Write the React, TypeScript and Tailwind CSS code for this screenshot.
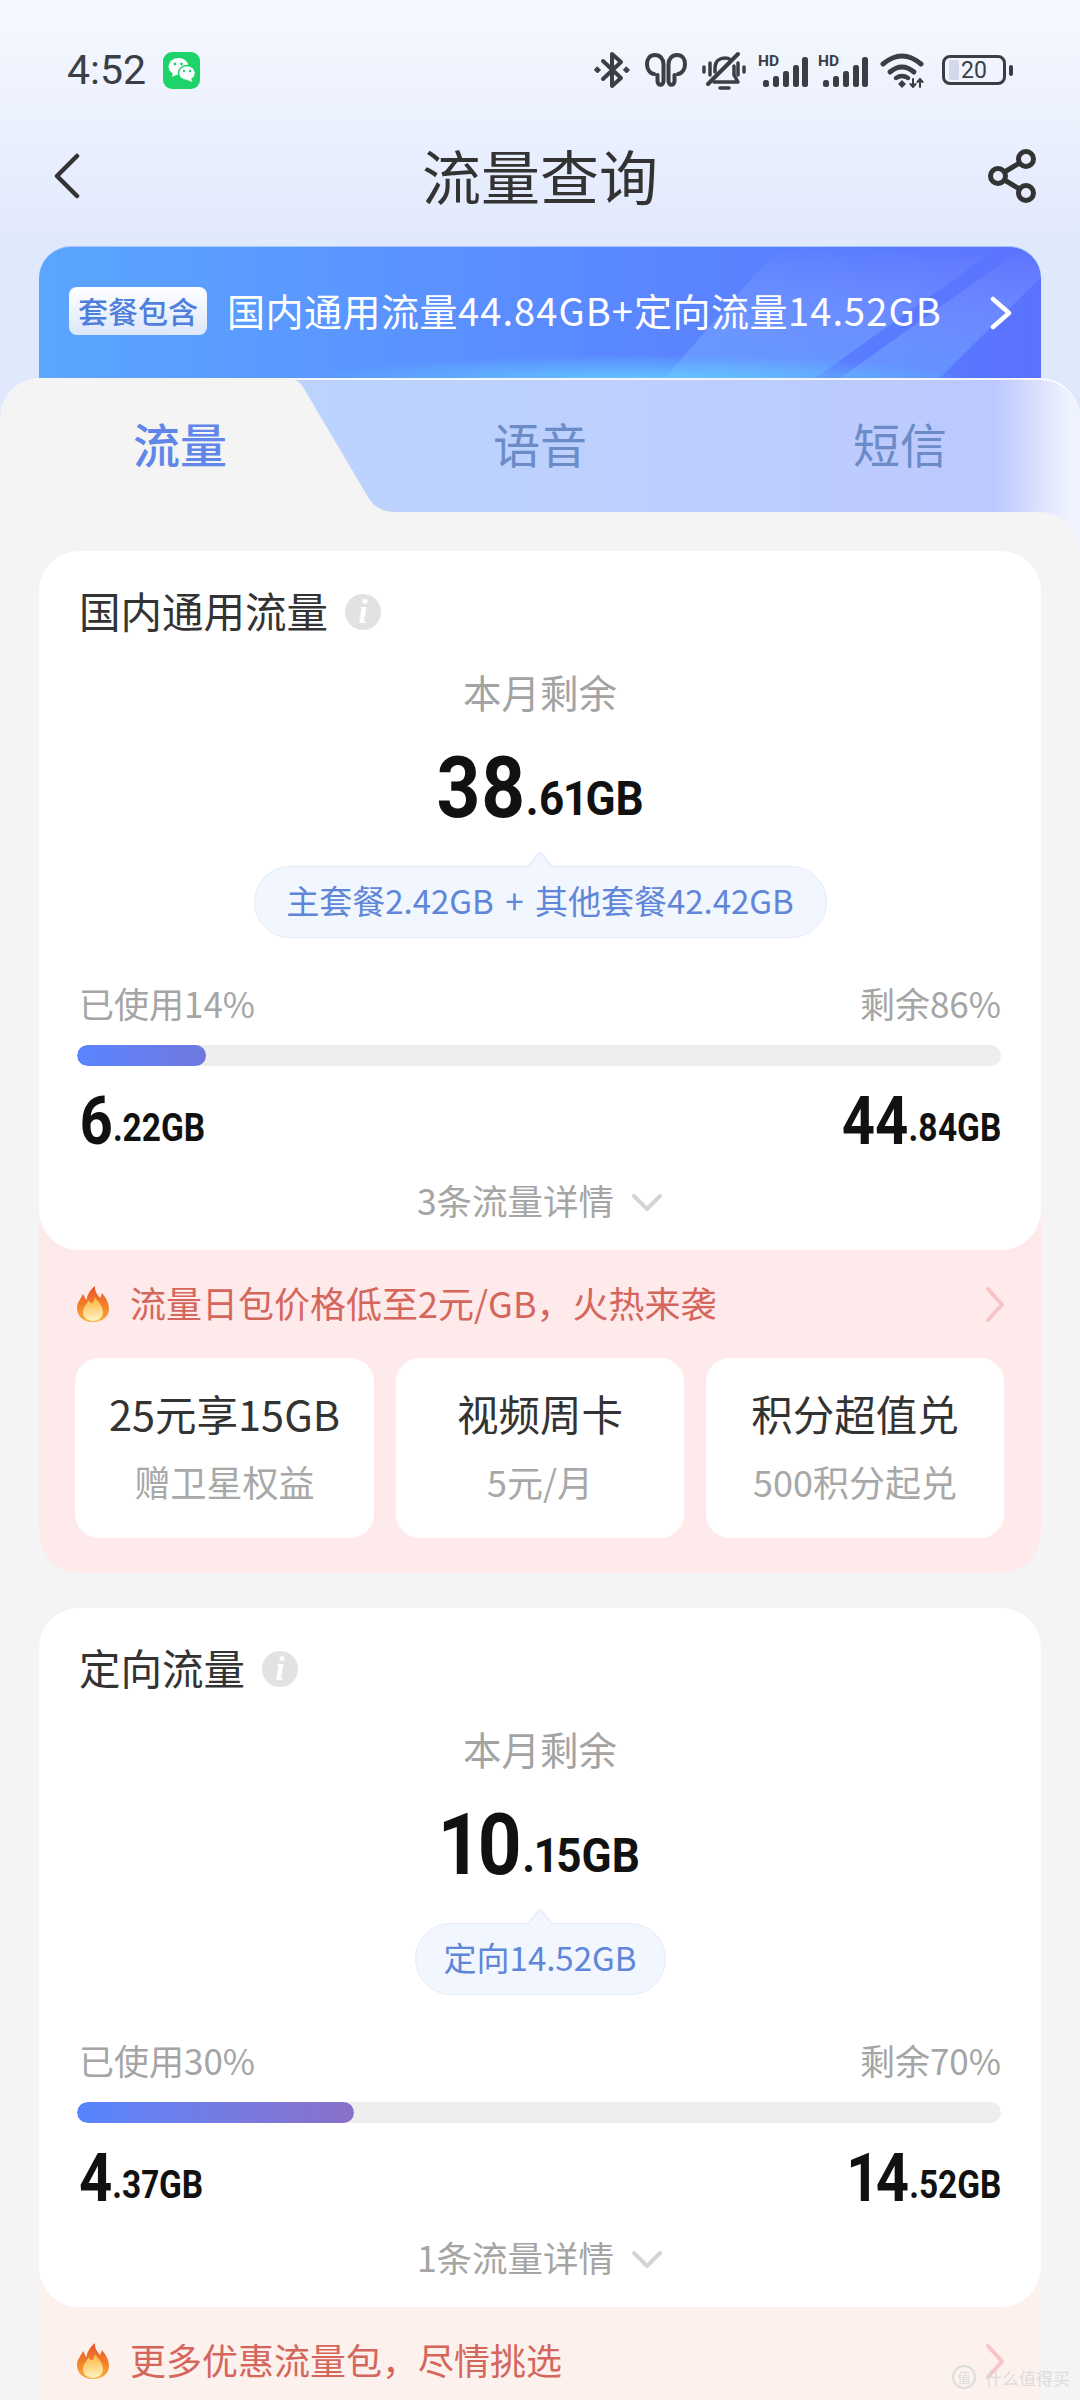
import React from 'react'

const cjk = "font-['Noto_Sans_CJK_SC','Noto_Sans',sans-serif]"

function Bluetooth() {
  return (
    <svg width="36" height="38" viewBox="0 0 36 38" fill="none" stroke="#3b3e44" strokeWidth="4" strokeLinejoin="round" strokeLinecap="round">
      <path d="M9 10 L27 27 L18 35 V3 L27 11 L9 28" />
      <path d="M3.5 16 L6.5 19 L3.5 22 L0.5 19 Z M32.5 16 L35.5 19 L32.5 22 L29.5 19 Z" fill="#3b3e44" strokeWidth="1" />
    </svg>
  )
}

function Buds() {
  return (
    <svg width="42" height="34" viewBox="0 0 42 34" fill="none" stroke="#3b3e44" strokeWidth="4" strokeLinecap="round" strokeLinejoin="round">
      <path d="M9 21 C4 20 2 15 2 11 C2 6 5 2 10 2 C15 2 18.5 6 18.5 11 V28 C18.5 33 12.5 33 12.5 28 V22" />
      <path d="M33 21 C38 20 40 15 40 11 C40 6 37 2 32 2 C27 2 23.5 6 23.5 11 V28 C23.5 33 29.500 33 29.500 28 V22" />
    </svg>
  )
}

function BellOff() {
  return (
    <svg width="44" height="39" viewBox="0 0 44 39" fill="none" stroke="#3b3e44" strokeWidth="3.5" strokeLinecap="round" strokeLinejoin="round">
      <path d="M13 21 V17 C13 10 18 7 23 7 C25 7 27 7.500 28 8.500 M32 15 V24 L36 31 H12" />
      <path d="M6 33 L36 3" strokeWidth="4" />
      <path d="M2 16 V21 M8 12 V24 M36 12 V24 M42 16 V21" />
      <path d="M18 37 H27" />
    </svg>
  )
}

function Signal() {
  const bars = [
    { x: 5, h: 7 },
    { x: 15, h: 11 },
    { x: 25, h: 16 },
    { x: 35, h: 22 },
    { x: 44, h: 30 },
  ]
  return (
    <svg width="50" height="36" viewBox="0 0 50 36">
      <text x="0" y="14" fontFamily="Roboto, sans-serif" fontWeight="700" fontSize="15.500" fill="#3b3e44">HD</text>
      {bars.map((b) => (
        <rect key={b.x} x={b.x} y={35 - b.h} width="6" height={b.h} rx="2.500" fill="#3b3e44" />
      ))}
    </svg>
  )
}

function Wifi() {
  return (
    <svg width="47" height="35" viewBox="0 0 47 35" fill="none" stroke="#3b3e44" strokeLinecap="round">
      <path d="M3 11 Q22 -5 41 11" strokeWidth="5" />
      <path d="M10 19 Q22 9 34 19" strokeWidth="5" />
      <path d="M16 25 Q22 21 28 25" strokeWidth="4.500" />
      <path d="M22 27 L26 31 L22 35 L18 31 Z" fill="#3b3e44" stroke="none" />
      <path d="M33 26 V34 M30.500 31 L33 34 L35.500 31 M40 34 V26 M37.500 29 L40 26 L42.500 29" strokeWidth="2" />
    </svg>
  )
}

function Battery() {
  return (
    <div className="flex items-center">
      <div className="w-[64px] h-[30px] rounded-[8px] border-[3px] border-[#3b3e44] flex items-center pl-[4px]">
        <div className="w-[10px] h-[20px] rounded-[2px] bg-[#d3d9e8]" />
        <span className="ml-[2px] font-['Roboto',sans-serif] text-[23px] leading-none text-[#3b3e44]">20</span>
      </div>
      <div className="ml-[3px] w-[4px] h-[11px] rounded-full bg-[#3b3e44]" />
    </div>
  )
}

function WeChatBadge() {
  return (
    <div className="w-[37px] h-[37px] rounded-[9px] bg-[#1fd36b] flex items-center justify-center">
      <svg width="30" height="28" viewBox="0 0 30 28">
        <ellipse cx="11.500" cy="10.500" rx="10" ry="8.500" fill="#fff" />
        <path d="M6 16 L5 21 L11 18 Z" fill="#fff" />
        <ellipse cx="20" cy="17" rx="8.500" ry="7.500" fill="#fff" stroke="#1fd36b" strokeWidth="1.500" />
        <path d="M24 22 L25.500 26 L20 24 Z" fill="#fff" />
        <circle cx="8" cy="8" r="1.400" fill="#1fd36b" />
        <circle cx="14.500" cy="8" r="1.400" fill="#1fd36b" />
        <circle cx="17" cy="15" r="1.200" fill="#1fd36b" />
        <circle cx="23" cy="15" r="1.200" fill="#1fd36b" />
      </svg>
    </div>
  )
}

function Flame() {
  return (
    <svg width="34" height="36" viewBox="0 0 34 36" className="shrink-0">
      <defs>
        <linearGradient id="flameOuter" x1="0" y1="0" x2="0" y2="1">
          <stop offset="0" stopColor="#e8512a" />
          <stop offset="0.6" stopColor="#f5862a" />
          <stop offset="1" stopColor="#fbb040" />
        </linearGradient>
        <linearGradient id="flameInner" x1="0" y1="0" x2="0" y2="1">
          <stop offset="0" stopColor="#fbb338" />
          <stop offset="1" stopColor="#fff3c4" />
        </linearGradient>
      </defs>
      <path d="M17 36 C7 36 1 30 1 22 C1 16 5 13 7 8 C9 11 9 13 10.500 14 C11 9 14 4 19 0 C18.500 5 21 8 24 12 C25 10 25.500 9 26 7 C30 12 33 17 33 23 C33 31 26 36 17 36 Z" fill="url(#flameOuter)" />
      <path d="M17 35 C11 35 7 31 7 26 C7 21 11 18 13 14 C14 17 15 18 17 16 C18 15 18.500 13 18.500 11 C22 15 27 20 27 26 C27 31 23 35 17 35 Z" fill="url(#flameInner)" />
    </svg>
  )
}

function Chevron({ color, w = 20, h = 37, sw = 4, left = false }: { color: string; w?: number; h?: number; sw?: number; left?: boolean }) {
  const d = left ? `M${w - 3} 3 L3 ${h / 2} L${w - 3} ${h - 3}` : `M3 3 L${w - 3} ${h / 2} L3 ${h - 3}`
  return (
    <svg width={w} height={h} viewBox={`0 0 ${w} ${h}`} fill="none" stroke={color} strokeWidth={sw} strokeLinecap="round" strokeLinejoin="round">
      <path d={d} />
    </svg>
  )
}

function Info() {
  return (
    <div className="w-[36px] h-[36px] rounded-full bg-[#e2e2e2] flex items-center justify-center">
      <span className="font-['Liberation_Serif',serif] italic font-bold text-[34px] leading-none text-white">i</span>
    </div>
  )
}

function Amount({ big, small, side }: { big: string; small: string; side: 'left' | 'right' }) {
  return (
    <div className={side === 'left' ? 'h-[47px] flex items-end origin-left scale-x-[0.88] proportional-nums' : 'h-[47px] flex items-end origin-right scale-x-[0.88] proportional-nums'}>
      <span className="font-['Roboto',sans-serif] font-bold text-[66px] leading-[47px] text-[#111] relative top-[3px]">{big}</span>
      <span className="font-['Roboto',sans-serif] font-bold text-[38px] leading-[28px] text-[#111]">{small}</span>
    </div>
  )
}

function UsageCard(props: {
  title: string
  big: string
  small: string
  pill: string
  pillWidth: string
  usedLabel: string
  leftLabel: string
  fill: React.ReactNode
  usedBig: string
  usedSmall: string
  leftBig: string
  leftSmall: string
  detail: string
}) {
  return (
    <div className="bg-white rounded-[40px] pt-[40px] pb-[33px] px-[40px]">
      <div className="flex items-center h-[38px]">
        <span className={`${cjk} text-[41.500px] leading-[38px] text-[#333]`}>{props.title}</span>
        <div className="ml-[17px] mt-[4px]"><Info /></div>
      </div>
      <div className={`${cjk} mt-[44px] h-[36px] text-center text-[38.500px] leading-[36px] text-[#a3a3a3]`}>本月剩余</div>
      <div className="mt-[48px] h-[60px] flex justify-center">
        <div className="flex items-end scale-x-[0.9] proportional-nums">
          <span className="font-['Roboto',sans-serif] font-bold text-[85px] leading-[60px] text-[#111] relative top-[1px]">{props.big}</span>
          <span className="font-['Roboto',sans-serif] font-bold text-[49px] leading-[36px] text-[#111]">{props.small}</span>
        </div>
      </div>
      <div className="mt-[49px] flex justify-center">
        <div className={`${props.pillWidth} relative h-[72px] rounded-[36px] bg-[#f2f6fe] border-[1.5px] border-[#e4ebf9] flex items-center justify-center pb-[3px]`}>
          <svg width="26" height="16" viewBox="0 0 26 16" className="absolute top-[-15px] left-1/2 -translate-x-1/2">
            <path d="M1 16 L11 2 Q13 0 15 2 L25 16 Z" fill="#f2f6fe" />
            <path d="M1 15 L11 2 Q13 0 15 2 L25 15" fill="none" stroke="#e4ebf9" strokeWidth="1.500" />
          </svg>
          <span className={`${cjk} text-[33px] leading-none text-[#5f86d8] [word-spacing:4px]`}>{props.pill}</span>
        </div>
      </div>
      <div className={`${cjk} mt-[49px] h-[32px] flex justify-between text-[35px] leading-[32px] text-[#a5a5a5]`}>
        <span>{props.usedLabel}</span>
        <span>{props.leftLabel}</span>
      </div>
      <div className="mt-[26px] -ml-[2px] h-[21px] rounded-full bg-[#eeeeee] overflow-hidden">{props.fill}</div>
      <div className="mt-[29px] flex justify-between">
        <Amount big={props.usedBig} small={props.usedSmall} side="left" />
        <Amount big={props.leftBig} small={props.leftSmall} side="right" />
      </div>
      <div className="mt-[43px] h-[32px] flex items-center justify-center pb-[2px]">
        <span className={`${cjk} text-[35.500px] leading-[32px] text-[#a5a5a5]`}>{props.detail}</span>
        <div className="ml-[17px] mt-[4px]">
          <svg width="32" height="19" viewBox="0 0 32 19" fill="none" stroke="#d4d4d4" strokeWidth="4" strokeLinecap="round" strokeLinejoin="round">
            <path d="M3 3 L16 16 L29 3" />
          </svg>
        </div>
      </div>
    </div>
  )
}

function PromoRow({ text }: { text: string }) {
  return (
    <div className="flex items-center h-[36px] pl-[37px] pr-[36px]">
      <Flame />
      <span className={`${cjk} ml-[20px] mb-[5px] text-[36px] leading-[36px] text-[#d4665c]`}>{text}</span>
      <div className="ml-auto"><Chevron color="#f6c4c4" /></div>
    </div>
  )
}

function OfferCard({ width, title, sub }: { width: string; title: string; sub: string }) {
  return (
    <div className={`${width} h-[180px] rounded-[24px] bg-white flex flex-col items-center pt-[33px]`}>
      <div className={`${cjk} text-[41.500px] leading-[44px] text-[#333]`}>{title}</div>
      <div className={`${cjk} mt-[28px] text-[36px] leading-[36px] text-[#a8a8a8]`}>{sub}</div>
    </div>
  )
}

export default function App() {
  return (
    <div className="relative w-[1080px] h-[2400px] overflow-hidden bg-[#f4f4f4]">
      <div className="bg-[linear-gradient(180deg,#f6f9ff_0px,#e0e8fc_250px,#dfe8fc_100%)] pb-[40px]">
        <div className="pt-[30px] h-[110px]">
          <div className="h-[80px] flex items-center pl-[67px] pr-[67px]">
            <span className="font-['Roboto',sans-serif] text-[41px] leading-none text-[#3b3e44]">4:52</span>
            <div className="ml-[17px]"><WeChatBadge /></div>
            <div className="ml-auto flex items-center">
              <Bluetooth />
              <div className="ml-[15px]"><Buds /></div>
              <div className="ml-[15px]"><BellOff /></div>
              <div className="ml-[12px]"><Signal /></div>
              <div className="ml-[10px]"><Signal /></div>
              <div className="ml-[12px]"><Wifi /></div>
              <div className="ml-[15px]"><Battery /></div>
            </div>
          </div>
        </div>
        <div className="mt-[26px] h-[80px] flex items-center justify-between px-[42px]">
          <div className="ml-[12px] mr-[12px]"><Chevron color="#333" w={26} h={46} sw={4.500} left /></div>
          <span className={`${cjk} text-[59px] leading-none text-[#333] pb-[3px]`}>流量查询</span>
          <svg width="50" height="54" viewBox="0 0 50 54" fill="none" stroke="#333" strokeWidth="5">
            <circle cx="38" cy="10" r="7.500" />
            <circle cx="10" cy="27" r="7.500" />
            <circle cx="38" cy="44" r="7.500" />
            <path d="M31.500 14 L16.500 23 M16.500 31 L31.500 40" />
          </svg>
        </div>
        <div className="relative mt-[30px] mx-[39px] h-[132px] rounded-t-[32px] overflow-hidden bg-gradient-to-r from-[#5aa6ff] via-[#5a8cff] to-[#5a72ff] flex items-center pl-[30px] pb-[6px] border-t border-[#a9c6ff]">
          <svg className="absolute inset-0" width="1002" height="132" viewBox="0 0 1002 132">
            <defs>
              <radialGradient id="glow" cx="0.5" cy="0.5" r="0.5">
                <stop offset="0" stopColor="#66d4ff" stopOpacity="0.9" />
                <stop offset="1" stopColor="#66d4ff" stopOpacity="0" />
              </radialGradient>
              <linearGradient id="stripe" x1="0" y1="1" x2="0" y2="0">
                <stop offset="0" stopColor="#6ec0ff" stopOpacity="0.35" />
                <stop offset="1" stopColor="#ffffff" stopOpacity="0" />
              </linearGradient>
            </defs>
            <polygon points="740,0 960,0 775,132 625,132" fill="url(#stripe)" />
            <polygon points="985,0 1002,0 1002,30 900,132 800,132" fill="url(#stripe)" />
            <ellipse cx="600" cy="136" rx="340" ry="28" fill="url(#glow)" />
          </svg>
          <div className="relative mt-[2px] w-[138px] h-[48px] rounded-[8px] bg-gradient-to-b from-white to-[#dde7fb] flex items-center justify-center">
            <span className={`${cjk} text-[30px] font-medium leading-none text-[#4f7fdc] pb-[2px]`}>套餐包含</span>
          </div>
          <span className={`${cjk} relative ml-[20px] text-[38px] tracking-[0.5px] leading-none text-white whitespace-nowrap`}>
            国内通用流量<span className="tracking-[1.100px]">44.84GB+</span>定向流量<span className="tracking-[1.100px]">14.52GB</span>
          </span>
          <div className="absolute right-[29px] top-[49px]">
            <Chevron color="#ffffff" w={22} h={34} sw={4.500} />
          </div>
        </div>
        <div className="relative h-[174px] rounded-t-[40px] overflow-hidden bg-[linear-gradient(90deg,#bcd7fe_0%,#bdcffe_60%,#bcc8fe_92%,#eff2ff_99%)] shadow-[inset_0_2px_0_rgba(255,255,255,0.8)]">
          <svg className="absolute left-0 top-0" width="400" height="174" viewBox="0 0 400 174">
            <path d="M0 0 H284 Q298 0 303 9 L368 119 Q376 134 396 134 V174 H0 Z" fill="#f4f4f4" />
          </svg>
          <div className="relative h-[134px] grid grid-cols-3 items-center text-center pb-[6px]">
            <span className={`${cjk} text-[47px] font-medium leading-none text-[#5f86e8]`}>流量</span>
            <span className={`${cjk} text-[47px] leading-none text-[#6b8cc6]`}>语音</span>
            <span className={`${cjk} text-[47px] leading-none text-[#6b8cc6]`}>短信</span>
          </div>
        </div>
      </div>
      <div className="relative -mt-[80px] rounded-tr-[40px] bg-[#f4f4f4] pt-[39px] px-[39px]">
        <div className="rounded-[40px] bg-[#feeaea] pb-[35px]">
          <UsageCard
            title="国内通用流量"
            big="38"
            small=".61GB"
            pill="主套餐2.42GB + 其他套餐42.42GB"
            pillWidth="w-[573px]"
            usedLabel="已使用14%"
            leftLabel="剩余86%"
            fill={<div className="w-[14%] h-full rounded-full bg-gradient-to-r from-[#5a84ff] to-[#6f78e0]" />}
            usedBig="6"
            usedSmall=".22GB"
            leftBig="44"
            leftSmall=".84GB"
            detail="3条流量详情"
          />
          <div className="mt-[36px]"><PromoRow text="流量日包价格低至2元/GB，火热来袭" /></div>
          <div className="mt-[36px] pl-[36px] flex gap-[22px]">
            <OfferCard width="w-[299px]" title="25元享15GB" sub="赠卫星权益" />
            <OfferCard width="w-[288px]" title="视频周卡" sub="5元/月" />
            <OfferCard width="w-[298px]" title="积分超值兑" sub="500积分起兑" />
          </div>
        </div>
        <div className="mt-[35px] rounded-[40px] bg-[#fdf1ee] pb-[60px]">
          <UsageCard
            title="定向流量"
            big="10"
            small=".15GB"
            pill="定向14.52GB"
            pillWidth="w-[251px]"
            usedLabel="已使用30%"
            leftLabel="剩余70%"
            fill={<div className="w-[30%] h-full rounded-full bg-gradient-to-r from-[#5585ff] to-[#8a70c8]" />}
            usedBig="4"
            usedSmall=".37GB"
            leftBig="14"
            leftSmall=".52GB"
            detail="1条流量详情"
          />
          <div className="mt-[36px]"><PromoRow text="更多优惠流量包，尽情挑选" /></div>
        </div>
      </div>
      <div className="absolute right-[10px] bottom-[10px] flex items-center gap-[8px]">
        <svg width="26" height="26" viewBox="0 0 26 26" fill="none" stroke="#dcdcdc" strokeWidth="2">
          <circle cx="13" cy="13" r="11" />
          <text x="13" y="18" textAnchor="middle" fontSize="13" fill="#dcdcdc" stroke="none" fontFamily="'Noto Sans CJK SC', sans-serif">值</text>
        </svg>
        <span className={`${cjk} text-[17px] leading-none text-[#dcdcdc]`}>什么值得买</span>
      </div>
    </div>
  )
}
